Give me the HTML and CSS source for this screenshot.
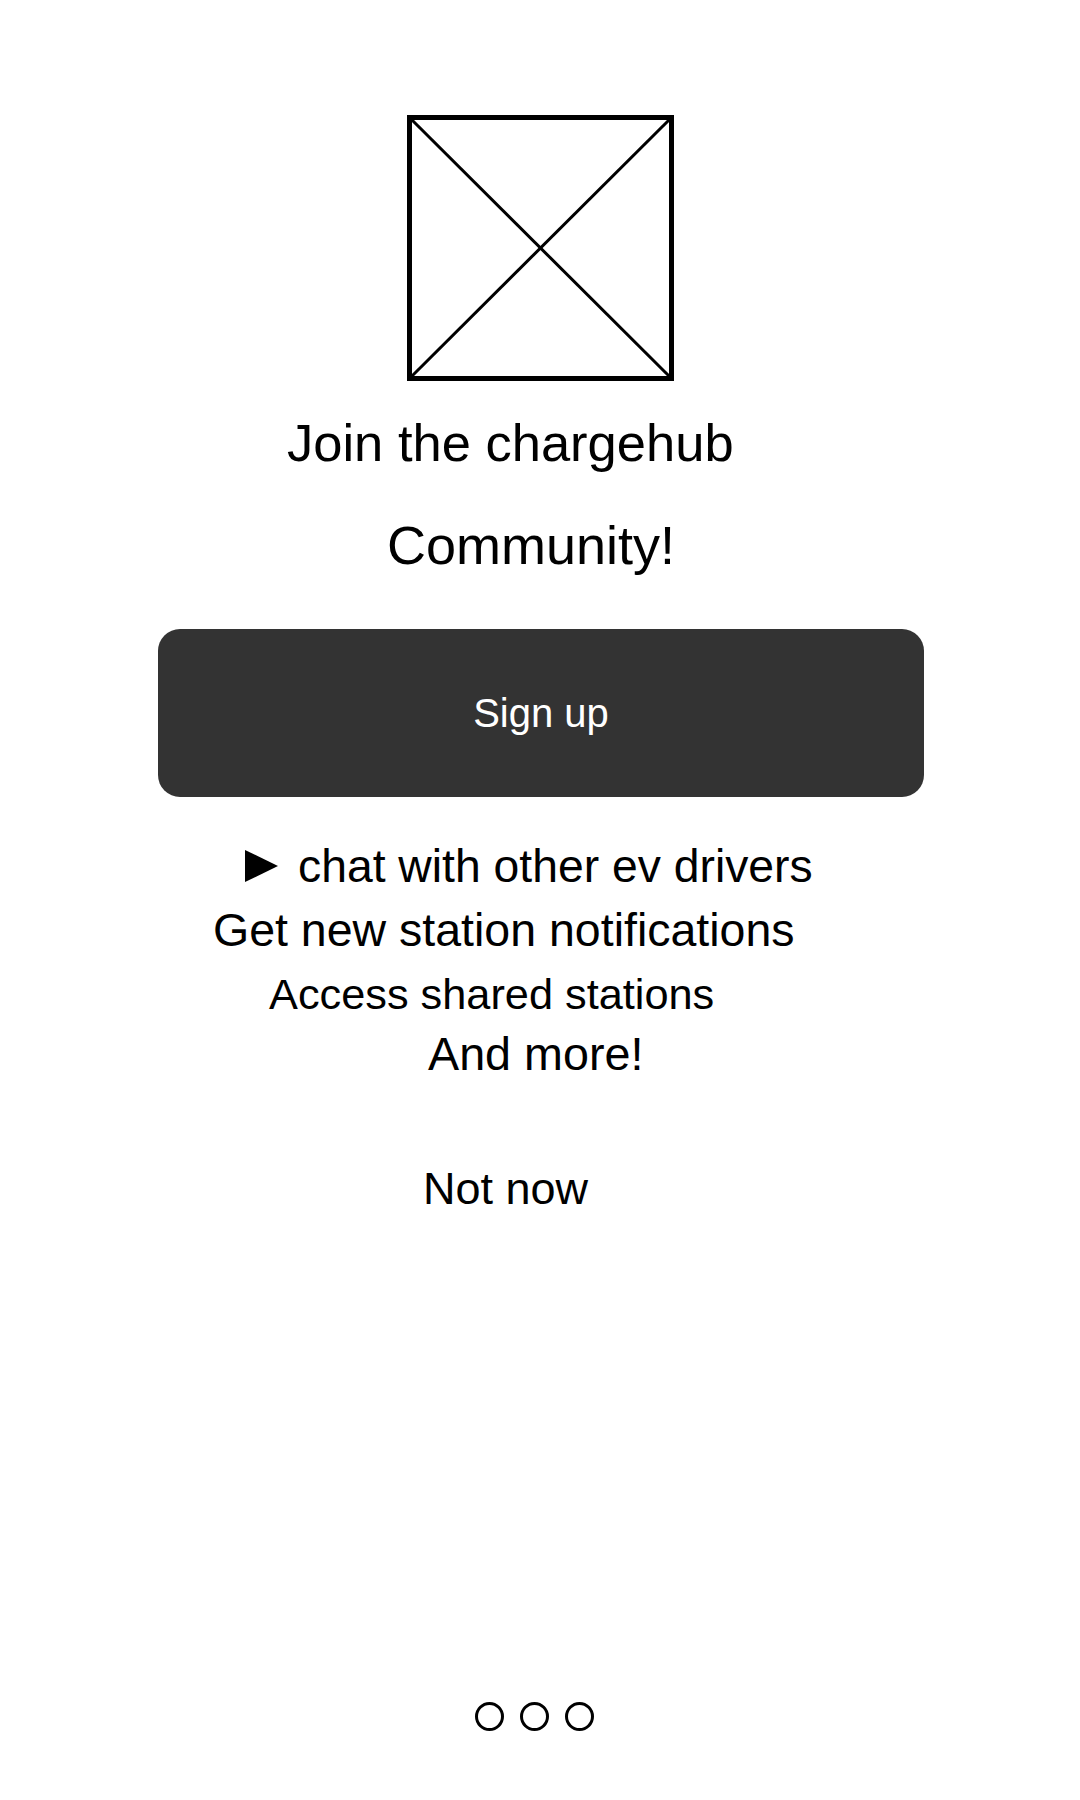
FILE: index.html
```html
<!DOCTYPE html>
<html lang="en">
<head>
<meta charset="utf-8">
<title>Join the chargehub Community</title>
<link rel="stylesheet" href="styles.css">
</head>
<body>
<main class="screen">
  <div class="hero-image">
    <svg width="267" height="266" viewBox="0 0 267 266" aria-hidden="true">
      <rect x="2.5" y="2.5" width="262" height="261" fill="none" stroke="#000" stroke-width="5"/>
      <line x1="3" y1="3" x2="264" y2="263" stroke="#000" stroke-width="3"/>
      <line x1="264" y1="3" x2="3" y2="263" stroke="#000" stroke-width="3"/>
    </svg>
  </div>

  <h1 class="title title-1">Join the chargehub</h1>
  <h1 class="title title-2">Community!</h1>

  <button class="signup-btn" type="button">Sign up</button>

  <ul class="features">
    <li class="feature feature-1"><svg class="bullet" width="33" height="32" viewBox="0 0 33 32" aria-hidden="true"><polygon points="0,0 33,16 0,32" fill="#000"/></svg>chat with other ev drivers</li>
    <li class="feature feature-2">Get new station notifications</li>
    <li class="feature feature-3">Access shared stations</li>
    <li class="feature feature-4">And more!</li>
  </ul>

  <a class="not-now" href="#">Not now</a>

  <div class="pager">
    <span class="dot"></span>
    <span class="dot"></span>
    <span class="dot"></span>
  </div>
</main>
</body>
</html>
```
FILE: styles.css
```css
html, body {
  margin: 0;
  padding: 0;
  background: #ffffff;
}

body {
  font-family: "Liberation Sans", Arial, sans-serif;
  color: #000;
}

.screen {
  width: 1080px;
  height: 1800px;
  display: flex;
  flex-direction: column;
  align-items: flex-start;
  box-sizing: border-box;
  padding-bottom: 69px;
}

.hero-image {
  margin-top: 115px;
  margin-left: 407px;
  line-height: 0;
}

.hero-image svg {
  display: block;
}

.title {
  margin: 0;
  font-weight: normal;
  line-height: 60px;
  white-space: nowrap;
}

.title-1 {
  font-size: 52.5px;
  margin-top: 32px;
  margin-left: 287px;
}

.title-2 {
  font-size: 54px;
  margin-top: 42px;
  margin-left: 387px;
}

.signup-btn {
  margin-top: 54px;
  margin-left: 158px;
  width: 766px;
  height: 168px;
  border: none;
  border-radius: 22px;
  background: #333333;
  color: #ffffff;
  font-family: "Liberation Sans", Arial, sans-serif;
  font-size: 40px;
  padding: 0;
  display: flex;
  align-items: center;
  justify-content: center;
  cursor: pointer;
}

.features {
  list-style: none;
  margin: 0;
  padding: 0;
  display: flex;
  flex-direction: column;
  align-items: flex-start;
}

.feature {
  font-size: 46.5px;
  line-height: 52px;
  white-space: nowrap;
}

.feature-1 {
  font-size: 46.3px;
  margin-top: 43px;
  margin-left: 245px;
}

.bullet {
  display: inline-block;
  vertical-align: baseline;
  margin-right: 20px;
}

.feature-2 {
  margin-top: 12px;
  margin-left: 213px;
}

.feature-3 {
  font-size: 43.3px;
  margin-top: 12px;
  margin-left: 269px;
}

.feature-4 {
  font-size: 46.7px;
  margin-top: 8px;
  margin-left: 428px;
}

.not-now {
  margin-top: 83px;
  margin-left: 423px;
  font-size: 45px;
  line-height: 52px;
  color: #000;
  text-decoration: none;
}

.pager {
  margin-top: auto;
  margin-left: 475px;
  display: flex;
  gap: 16px;
}

.dot {
  width: 29px;
  height: 29px;
  box-sizing: border-box;
  border: 3px solid #000;
  border-radius: 50%;
}
```
